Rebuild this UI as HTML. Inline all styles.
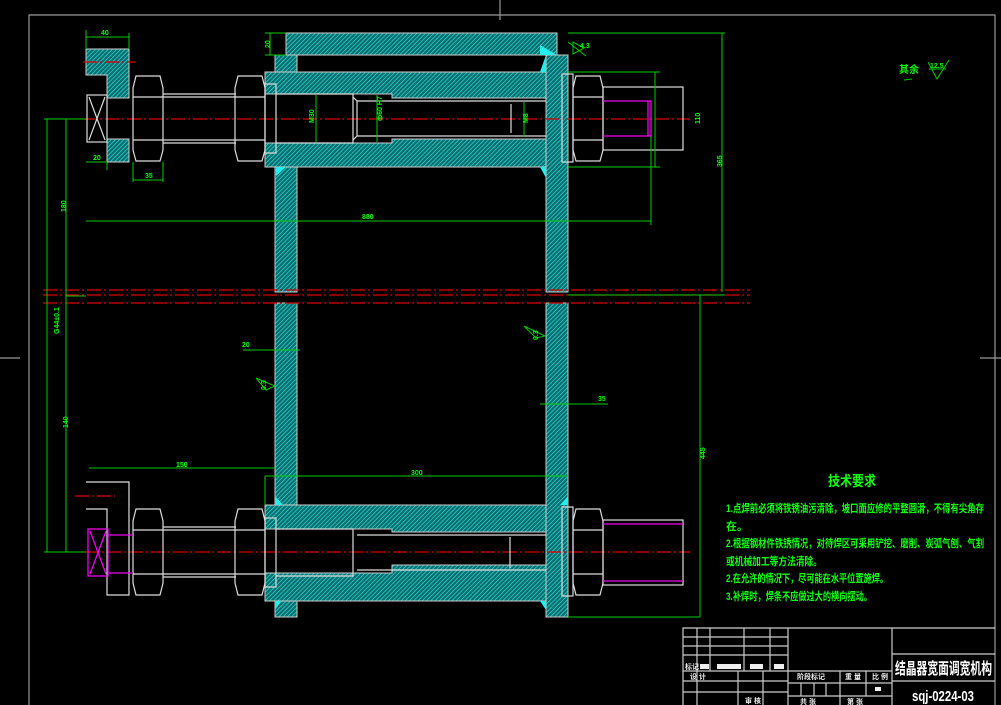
<!DOCTYPE html>
<html><head><meta charset="utf-8"><style>
html,body{margin:0;padding:0;background:#000;width:1001px;height:705px;overflow:hidden}
svg{display:block}
text{font-family:"Liberation Sans","Noto Sans CJK SC",sans-serif;font-weight:bold}
</style></head><body>
<svg width="1001" height="705" viewBox="0 0 1001 705" xmlns="http://www.w3.org/2000/svg">
<defs>
<pattern id="h" patternUnits="userSpaceOnUse" width="3" height="3" patternTransform="rotate(45)">
<rect width="3" height="3" fill="#0b6a6a"/><line x1="0" y1="0" x2="0" y2="3" stroke="#2ee" stroke-width="1.3"/>
</pattern>
</defs>
<g stroke="#999" fill="none" stroke-width="1.2">
<path d="M29 705 V15 H995 V705"/>
<path d="M500 0 V20 M0 358 H20 M980 358 H1001"/>
</g>
<g fill="url(#h)" stroke="#ccc" stroke-width="1">
<path d="M286 33 H557 V55 H286 Z"/>
<rect x="275" y="55" width="22" height="17"/>
<path d="M265 72 H546 V98 H392 V94 H265 Z"/>
<path d="M265 143 H392 V139 H546 V167 H265 Z"/>
<rect x="546" y="55" width="22" height="237"/>
<rect x="275" y="167" width="22" height="125"/>
<rect x="546" y="303" width="22" height="314"/>
<rect x="275" y="303" width="22" height="202"/>
<path d="M86 49 H129 V98 H107 V75 H86 Z"/>
<rect x="107" y="139" width="22" height="23"/>
<path d="M265 505 H546 V532 H392 V529 H265 Z"/>
<path d="M265 573 H392 V565 H546 V601 H265 Z"/>
<rect x="275" y="601" width="22" height="16"/>
</g>
<g fill="#2ee">
<path d="M540 45 L557 55 L540 55Z M546 55 L540 72 L546 72Z M540 167 L546 167 L546 178Z"/>
<path d="M276 167 L286 167 L276 176Z M275 496 L283 505 L275 505Z M568 496 L560 505 L568 505Z M275 601 L281 601 L275 610Z M546 601 L546 610 L540 601Z"/>
</g>
<g stroke="#d00" stroke-width="1.2" stroke-dasharray="14 3 2 3" fill="none">
<path d="M83 119 H690"/>
<path d="M43 290 H750 M43 295 H750 M43 303 H750"/>
<path d="M85 552 H690"/>
<path d="M83 62 H136 M75 496 H115"/>
</g>
<g stroke="#ddd" stroke-width="1.2" fill="none">
<rect x="87" y="95" width="20" height="47"/><path d="M89 97 L105 140 M105 97 L89 140"/>
<path d="M136 76 H160 L163 88 V150 L160 161 H136 L133 150 V88 Z M133 97 H163 M133 140 H163"/>
<path d="M163 94 H236 M163 97 H236 M163 140 H236 M163 143 H236"/>
<path d="M238 76 H262 L265 88 V150 L262 161 H238 L235 150 V88 Z M235 97 H265 M235 140 H265"/>
<rect x="265" y="84" width="11" height="69"/>
<path d="M276 94 H353 V143 H276 M357 101 H546 M357 136 H546 M353 97 L357 101 V136 L353 140"/>
<path d="M511 104 V133"/>
<rect x="562" y="74" width="11" height="88"/>
<path d="M576 76 H600 L603 88 V150 L600 161 H576 L573 150 V88 Z M573 97 H603 M573 140 H603"/>
<rect x="603" y="87" width="80" height="63"/>
<path d="M86 482 H129 V595 H107 V509 H86"/>
<path d="M136 509 H160 L163 521 V583 L160 595 H136 L133 583 V521 Z M133 530 H163 M133 574 H163"/>
<path d="M163 527 H236 M163 530 H236 M163 574 H236 M163 577 H236"/>
<path d="M238 509 H262 L265 521 V583 L262 595 H238 L235 583 V521 Z M235 530 H265 M235 574 H265"/>
<rect x="265" y="518" width="11" height="69"/>
<path d="M276 529 H353 V576 H276 M357 535 H546 M357 570 H546 M510 537 V568"/>
<rect x="562" y="507" width="11" height="89"/>
<path d="M576 509 H600 L603 521 V583 L600 595 H576 L573 583 V521 Z M573 530 H603 M573 574 H603"/>
<rect x="603" y="520" width="80" height="65"/>
</g>
<g stroke="#e0e" stroke-width="1.3" fill="none">
<path d="M603 101 H651 V136 H603 M648 101 V136"/>
<path d="M603 524 H683 M603 581 H683"/>
<rect x="88" y="529" width="20" height="47"/><path d="M90 531 L106 574 M106 531 L90 574"/>
<path d="M108 535 H133 M108 573 H133"/>
</g>
<g stroke="#0c0" stroke-width="1" fill="none">
<path d="M86 37 H129 M86 30 V49 M129 33 V49"/>
<path d="M265 33 H286 M270 33 V55 M265 55 H286"/>
<path d="M86 162 H107 M107 162 V170 M133 180 H163 M133 162 V182 M163 162 V182"/>
<path d="M86 221 H651 M651 136 V225"/>
<path d="M316 95 V142 M377 95 V142 M524 102 V137"/>
<path d="M568 33 H725 M722 33 V292 M568 72 H660 M568 167 H660 M655 72 V167"/>
<path d="M44 119 H86 M47 119 V552 M66 119 V552 M44 552 H86 M66 296 H86"/>
<path d="M89 468 H275 M265 476 H568 M265 476 V505"/>
<path d="M243 350 H300 M540 404 H608"/>
<path d="M568 295 H725 M700 295 V617 M568 617 H700"/>
<path d="M568 42 L586 56 M573 42 V54 L584 48 Z"/>
<path d="M904 80 L912 79 M928 62 L937 79 L949 60 M929 69 H946"/>
<path d="M524 326 L545 336 L536 338 Z M256 378 L275 386 L266 390 Z"/>
</g>
<g fill="#0f0" font-size="7">
<text x="101" y="35">40</text><text x="262" y="48" transform="rotate(-90 266 44)">20</text>
<text x="93" y="160">20</text><text x="145" y="178">35</text>
<text x="61" y="213" transform="rotate(-90 63 210)">180</text>
<text x="362" y="219">880</text>
<text x="308" y="123" transform="rotate(-90 311 120)">M30</text>
<text x="370" y="127" transform="rotate(-90 373 118)">ф60 H7</text>
<text x="521" y="124" transform="rotate(-90 524 120)">M8</text>
<text x="692" y="124" transform="rotate(-90 696 120)">110</text>
<text x="713" y="168" transform="rotate(-90 717 163)">365</text>
<text x="580" y="48">4.3</text>
<text x="40" y="345" transform="rotate(-90 44 330)">G44±0.1</text>
<text x="60" y="430" transform="rotate(-90 63 425)">140</text>
<text x="176" y="467">150</text><text x="411" y="475">300</text>
<text x="242" y="347">20</text><text x="598" y="401">35</text>
<text x="696" y="460" transform="rotate(-90 700 455)">445</text>
<text x="258" y="390" transform="rotate(-90 262 386)">0.3</text>
<text x="530" y="340" transform="rotate(-90 534 336)">0.3</text>
</g>
<text x="899" y="73" fill="#0f0" font-size="10">其余</text>
<text x="930" y="68" fill="#0f0" font-size="7">12.5</text>
<g fill="#1f1" font-size="11">
<text x="828" y="486" font-size="14" textLength="48" lengthAdjust="spacingAndGlyphs">技术要求</text>
<text x="726" y="512" textLength="258" lengthAdjust="spacingAndGlyphs">1.点焊前必须将铁锈油污清除，坡口面应修的平整圆滑，不得有尖角存</text>
<text x="726" y="530">在。</text>
<text x="726" y="547" textLength="258" lengthAdjust="spacingAndGlyphs">2.根据钢材件铁锈情况，对待焊区可采用铲挖、磨削、炭弧气刨、气割</text>
<text x="726" y="565" textLength="96" lengthAdjust="spacingAndGlyphs">或机械加工等方法清除。</text>
<text x="726" y="582" textLength="162" lengthAdjust="spacingAndGlyphs">2.在允许的情况下，尽可能在水平位置施焊。</text>
<text x="726" y="600" textLength="146" lengthAdjust="spacingAndGlyphs">3.补焊时，焊条不应做过大的横向摆动。</text>
</g>
<g stroke="#ccc" stroke-width="1.2" fill="none">
<path d="M683 705 V628 H995 M892 628 V705 M788 628 V705 M892 654 H995 M892 681 H995"/>
<path d="M683 637 H788 M683 646 H788 M683 655 H788 M683 671 H788 M683 681 H788 M683 692 H788"/>
<path d="M697 628 V705 M710 628 V671 M744 628 V671 M770 628 V671 M738 671 V705 M763 671 V705"/>
<path d="M788 671 H892 M788 683 H892 M788 696 H892 M840 671 V705 M866 671 V696 M801 683 V696 M814 683 V696 M826 683 V696"/>
</g>
<g fill="#eee">
<rect x="700" y="664" width="9" height="5"/><rect x="717" y="664" width="24" height="5"/><rect x="750" y="664" width="13" height="5"/><rect x="774" y="664" width="10" height="5"/>
<rect x="875" y="687" width="6" height="4"/>
</g>
<g fill="#eee" font-size="7">
<text x="685" y="669">标记</text><text x="690" y="679">设 计</text><text x="745" y="703">审 核</text>
<text x="797" y="679">阶段标记</text><text x="845" y="679">重 量</text><text x="872" y="679">比 例</text>
<text x="800" y="704">共 张</text><text x="847" y="704">第 张</text>
</g>
<text x="895" y="674" fill="#fff" font-size="16" textLength="97" lengthAdjust="spacingAndGlyphs">结晶器宽面调宽机构</text>
<text x="912" y="701" fill="#fff" font-size="15" textLength="62" lengthAdjust="spacingAndGlyphs" font-family="Liberation Sans Narrow,Liberation Sans,sans-serif">sqj-0224-03</text>
</svg>
</body></html>
